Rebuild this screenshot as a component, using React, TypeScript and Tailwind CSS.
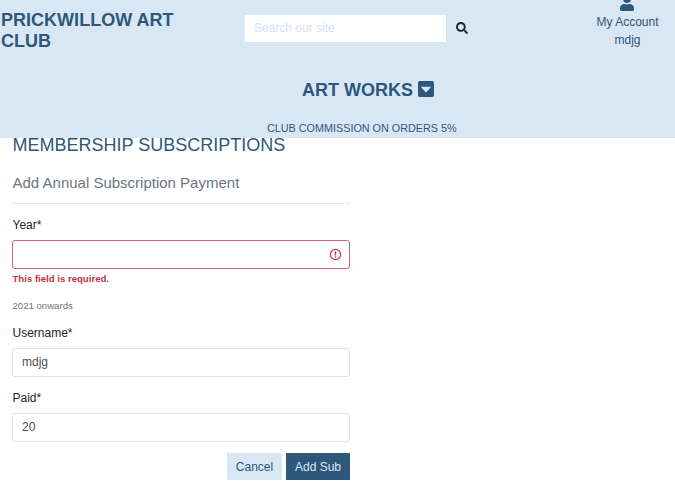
import { FaSearch, FaUser } from 'react-icons/fa';

function Header() {
  return (
    <header className="h-[138px] overflow-hidden bg-[#d9e7f4] text-[#2d587b]">
      <div className="flex h-[79px] items-start">
        <h1 className="w-[245px] pt-[10px] pl-px text-[18px] leading-[21px] font-bold tracking-[0.02px]">
          PRICKWILLOW ART
          <br />
          CLUB
        </h1>
        <form className="flex pt-[15px]">
          <input
            type="text"
            placeholder="Search our site"
            className="h-[27px] w-[201px] bg-white px-[9px] pb-[2px] text-[12px] outline-none placeholder:text-[#d4e3f1]"
          />
          <button type="button" aria-label="Search" className="flex h-[26px] items-center pl-[10px] text-[#212529]">
            <FaSearch size={12} />
          </button>
        </form>
        <a className="ml-auto mr-[16.5px] flex flex-col items-center text-[12px] leading-[18px]">
          <FaUser size={16} className="-mt-[5px] mb-[2px] shrink-0" />
          <span>My Account</span>
          <span>mdjg</span>
        </a>
      </div>
      <nav className="flex h-[22px] items-center pl-[302px] text-[18px] leading-[22px] font-bold">
        <span>ART WORKS</span>
        <svg viewBox="0 0 16 16" className="mb-[2px] ml-[5px] size-[16px]" fill="currentColor">
          <path fillRule="evenodd" d="M1.7 0h12.6A1.7 1.7 0 0 1 16 1.7v12.6a1.7 1.7 0 0 1-1.7 1.7H1.7A1.7 1.7 0 0 1 0 14.3V1.7A1.7 1.7 0 0 1 1.7 0zM4 5.8c-.6 0-.8.6-.4 1l3.9 4.1c.3.3.7.3 1 0l3.9-4.1c.4-.4.2-1-.4-1z" />
        </svg>
      </nav>
      <p className="mt-[19px] pl-[267px] text-[10.8px] leading-[16px]">CLUB COMMISSION ON ORDERS 5%</p>
    </header>
  );
}

function Field({ label, value }: { label: string; value: string }) {
  return (
    <div className="mb-[11px]">
      <label className="block h-[24px] pl-[0.5px] leading-[18px]">{label}*</label>
      <input
        type="text"
        defaultValue={value}
        className="block h-[29px] w-full rounded-[3px] border border-[#dee2e6] px-[9px] pb-[2px] text-[12px] text-[#495057] outline-none"
      />
    </div>
  );
}

export default function App() {
  return (
    <div className="h-[502px] w-[675px] overflow-hidden bg-white font-['Liberation_Sans',Arial,sans-serif] text-[12px] text-[#212529]">
      <Header />
      <main className="ml-[12px] w-[338px]">
        <h2 className="-mt-[4px] h-[22px] pl-[0.5px] text-[18px] leading-[22px] text-[#2d587b]">MEMBERSHIP SUBSCRIPTIONS</h2>
        <h3 className="mt-[18px] pl-[0.5px] text-[15px] leading-[18px] text-[#6c757d]">Add Annual Subscription Payment</h3>
        <hr className="mt-[11px] border-[#e9e9e9]" />
        <form className="pt-[12px]">
          <label className="block h-[24px] pl-[0.5px] leading-[18px]">Year*</label>
          <div className="flex h-[29px] items-center rounded-[3px] border border-[#d9606e] pr-[7px]">
            <input type="text" aria-label="Year" className="min-w-0 flex-1 px-[9px] outline-none" />
            <svg viewBox="0 0 13 13" className="size-[13px]" fill="none" stroke="#cf3040" strokeWidth="1.2">
              <circle cx="6.5" cy="6.5" r="5.1" />
              <path strokeLinejoin="round" d="M6.3 3.9h.4L6.5 6.9z" />
              <circle cx="6.5" cy="8.9" r=".75" fill="#cf3040" stroke="none" />
            </svg>
          </div>
          <p className="mt-[3px] pl-[0.5px] text-[9.6px] leading-[14px] font-bold text-[#c82f43]">This field is required.</p>
          <p className="mt-[13px] mb-[11px] pl-[0.5px] text-[9.6px] leading-[14px] text-[#6c757d]">2021 onwards</p>
          <Field label="Username" value="mdjg" />
          <div className="pt-px">
            <Field label="Paid" value="20" />
          </div>
          <div className="flex justify-end gap-[4px]">
            <button type="button" className="h-[27px] w-[55px] bg-[#d9e7f4] text-[#2d587b]">Cancel</button>
            <button type="button" className="h-[27px] w-[64px] bg-[#2d587b] text-[#d9e7f4]">Add Sub</button>
          </div>
        </form>
      </main>
    </div>
  );
}
